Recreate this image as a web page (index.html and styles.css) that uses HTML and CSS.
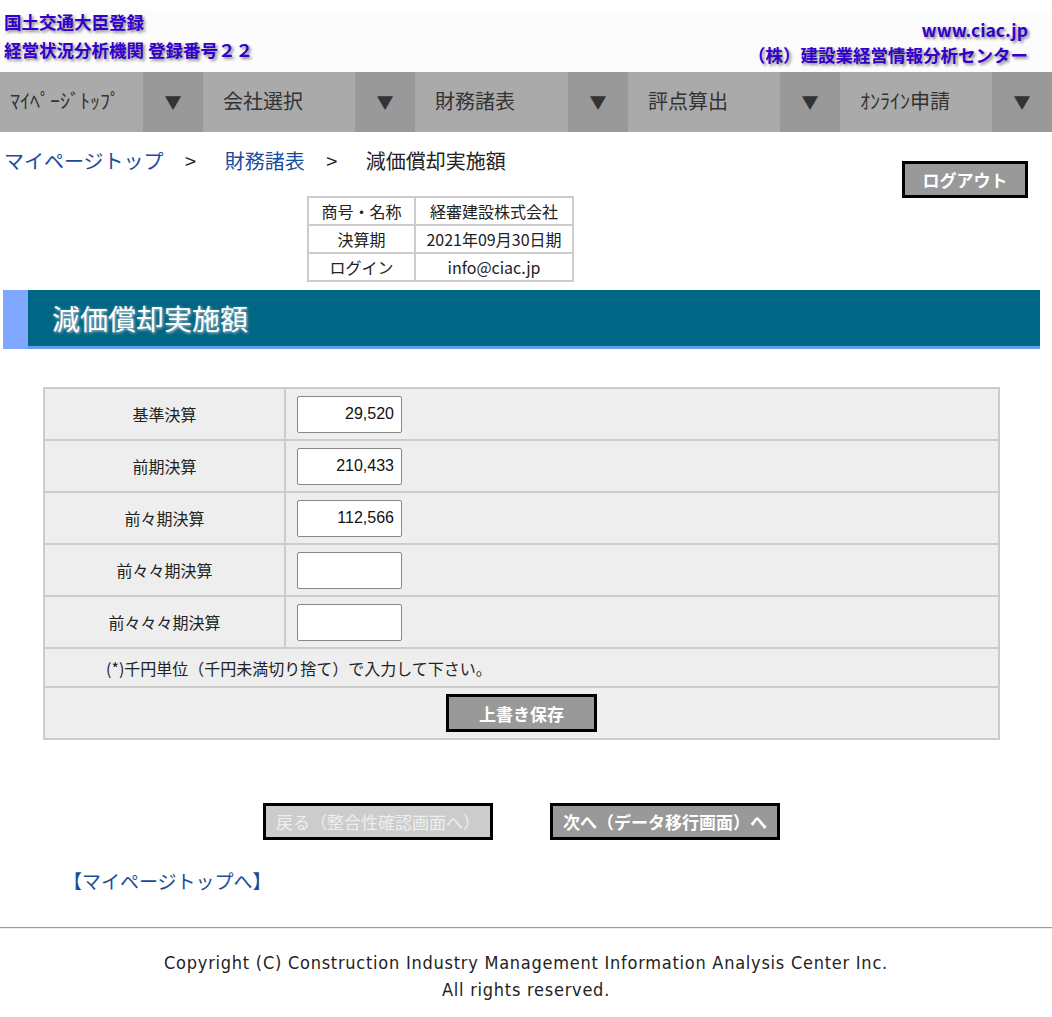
FILE: index.html
```html
<!DOCTYPE html>
<html lang="ja">
<head>
<meta charset="utf-8">
<title>減価償却実施額</title>
<link rel="stylesheet" href="styles.css">
</head>
<body>
<header class="site-header">
  <div class="brand-left">
    <div>国土交通大臣登録</div>
    <div>経営状況分析機関 登録番号２２</div>
  </div>
  <div class="brand-right">
    <div>www.ciac.jp</div>
    <div>（株）建設業経営情報分析センター</div>
  </div>
</header>
<nav class="gnav">
  <div class="gnav-item first"><span class="gnav-label">ﾏｲﾍﾟｰｼﾞﾄｯﾌﾟ</span><span class="gnav-arrow">▼</span></div>
  <div class="gnav-item"><span class="gnav-label">会社選択</span><span class="gnav-arrow">▼</span></div>
  <div class="gnav-item"><span class="gnav-label">財務諸表</span><span class="gnav-arrow">▼</span></div>
  <div class="gnav-item"><span class="gnav-label">評点算出</span><span class="gnav-arrow">▼</span></div>
  <div class="gnav-item"><span class="gnav-label">ｵﾝﾗｲﾝ申請</span><span class="gnav-arrow">▼</span></div>
</nav>
<section class="top-area">
  <div class="top-main">
    <div class="crumbs">
      <a class="crumb-link" href="#">マイページトップ</a>
      <span class="crumb-sep">&gt;</span>
      <a class="crumb-link" href="#">財務諸表</a>
      <span class="crumb-sep">&gt;</span>
      <span class="crumb-current">減価償却実施額</span>
    </div>
    <table class="info">
      <tr><td class="info-h">商号・名称</td><td>経審建設株式会社</td></tr>
      <tr><td class="info-h">決算期</td><td>2021年09月30日期</td></tr>
      <tr><td class="info-h">ログイン</td><td>info@ciac.jp</td></tr>
    </table>
  </div>
  <div class="logout-wrap"><button class="btn btn-logout">ログアウト</button></div>
</section>
<div class="title-bar"><h1 class="title">減価償却実施額</h1></div>
<table class="form">
  <tr><td class="form-label">基準決算</td><td class="form-field"><input class="num" value="29,520"></td></tr>
  <tr><td class="form-label">前期決算</td><td class="form-field"><input class="num" value="210,433"></td></tr>
  <tr><td class="form-label">前々期決算</td><td class="form-field"><input class="num" value="112,566"></td></tr>
  <tr><td class="form-label">前々々期決算</td><td class="form-field"><input class="num" value=""></td></tr>
  <tr><td class="form-label">前々々々期決算</td><td class="form-field"><input class="num" value=""></td></tr>
  <tr><td class="form-note" colspan="2">(*)千円単位（千円未満切り捨て）で入力して下さい。</td></tr>
  <tr><td class="form-save" colspan="2"><button class="btn btn-save">上書き保存</button></td></tr>
</table>
<div class="pager">
  <button class="btn btn-back">戻る（整合性確認画面へ）</button>
  <button class="btn btn-next">次へ（データ移行画面）へ</button>
</div>
<div class="back-link"><a href="#">【マイページトップへ】</a></div>
<footer class="footer">
  <p>Copyright (C) Construction Industry Management Information Analysis Center Inc.</p>
  <p>All rights reserved.</p>
</footer>
</body>
</html>
```

FILE: styles.css
```css
* { box-sizing: border-box; }
body {
  margin: 0;
  font-family: "Noto Sans CJK JP", "Noto Sans", sans-serif;
  color: #222;
  background: #fff;
}
.site-header {
  margin-top: 10px;
  height: 62px;
  background: #fcfcfc;
  display: flex;
  justify-content: space-between;
  font-weight: bold;
  font-size: 17.5px;
  color: #3300cc;
  text-shadow: 2px 2px 3px #888;
}
.brand-left { margin-top: -2px; padding: 0 0 0 4px; line-height: 28px; }
.brand-right { padding: 7px 24px 0 0; line-height: 25px; text-align: right; }

.gnav {
  display: grid;
  grid-template-columns: 203px 212px 213px 212px 1fr;
  height: 60px;
  background: #aaa;
}
.gnav-item { display: flex; }
.gnav-label {
  flex: 1;
  display: flex;
  align-items: center;
  padding: 0 0 3px 20px;
  font-size: 20px;
  color: #333;
}
.gnav-item.first .gnav-label { padding-left: 10px; }
.gnav-arrow {
  width: 60px;
  background: #999;
  display: flex;
  align-items: center;
  justify-content: center;
  padding-bottom: 2px;
  font-size: 17px;
  color: #333;
}

.top-area { display: flex; justify-content: space-between; }
.crumbs {
  padding: 16px 0 0 4px;
  font-size: 20px;
  line-height: 26px;
}
.crumb-link { color: #1a4c9c; text-decoration: none; }
.crumb-sep { margin: 0 24px 0 17px; color: #222; }
.crumb-current { color: #222; }
.info {
  margin: 22px 0 0 307px;
  border-collapse: collapse;
  font-size: 16px;
}
.info td {
  border: 2px solid #ccc;
  height: 28px;
  padding: 0 6px;
  text-align: center;
}
.info td.info-h { width: 107px; }
.info td + td { width: 158px; }
.logout-wrap { padding: 29px 24px 0 0; }

.btn {
  font-family: "Noto Sans CJK JP", sans-serif;
  border: 3px solid #000;
  background: #999;
  color: #fff;
  font-weight: bold;
  font-size: 17px;
  padding: 0;
  cursor: pointer;
}
.btn-logout { width: 126px; height: 37px; }

.title-bar {
  margin: 8px 12px 0 3px;
  padding: 0 0 3px 25px;
  background: linear-gradient(to right, #7fa7ff 25px, #6a9be8 25px);
}
.title {
  margin: 0;
  height: 56px;
  background: #006685;
  color: #fff;
  font-size: 28px;
  font-weight: normal;
  line-height: 56px;
  padding-left: 24px;
  text-shadow: 1px 1px 3px #ccc;
}

.form {
  margin: 38px 0 0 43px;
  width: 957px;
  border-collapse: collapse;
  background: #eee;
  font-size: 16px;
}
.form td { border: 2px solid #ccc; }
.form-label { width: 241px; height: 52px; text-align: center; }
.form-field { padding: 0 0 0 11px; }
.num {
  display: block;
  width: 105px;
  height: 37px;
  border: 1px solid #888;
  border-radius: 2px;
  background: #fff;
  text-align: right;
  font-family: "Liberation Sans", Arial, sans-serif;
  font-size: 16px;
  color: #111;
  padding: 0 7px;
}
.form-note { height: 39px; padding-left: 61px; }
.form-save { height: 52px; text-align: center; }
.btn-save { width: 151px; height: 38px; vertical-align: middle; }

.pager {
  margin: 63px 0 0 43px;
  width: 957px;
  display: flex;
  justify-content: center;
  gap: 57px;
}
.btn-back, .btn-next { width: 230px; height: 37px; }
.btn-back { background: #ccc; color: #eee; font-weight: normal; }

.back-link {
  margin-top: 29px;
  padding-left: 63px;
  font-size: 19px;
  line-height: 24px;
}
.back-link a { color: #1a4c9c; text-decoration: none; }

.footer {
  margin-top: 34px;
  border-top: 1px solid #999;
  box-shadow: 0 1px 0 #eee inset;
  padding-top: 21px;
  text-align: center;
  font-family: "DejaVu Sans Condensed", "DejaVu Sans", sans-serif;
  font-size: 18px;
  letter-spacing: 0.75px;
  color: #222;
}
.footer p { margin: 0; line-height: 27px; }
```
